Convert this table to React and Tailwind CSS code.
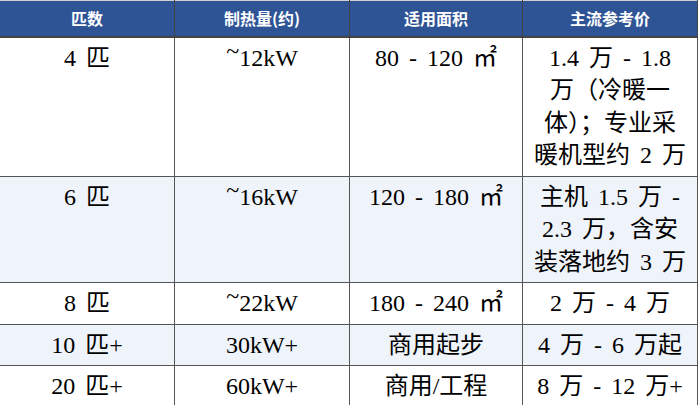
import React from 'react';

const rows = [
  { hp: '4 匹', heat: '~12kW', tilde: true, area: '80 - 120 ㎡', price: ['1.4 万 - 1.8', '万（冷暖一', '体）；专业采', '暖机型约 2 万'], shade: false },
  { hp: '6 匹', heat: '~16kW', tilde: true, area: '120 - 180 ㎡', price: ['主机 1.5 万 -', '2.3 万，含安', '装落地约 3 万'], shade: true },
  { hp: '8 匹', heat: '~22kW', tilde: true, area: '180 - 240 ㎡', price: ['2 万 - 4 万'], shade: false },
  { hp: '10 匹+', heat: '30kW+', area: '商用起步', price: ['4 万 - 6 万起'], shade: true },
  { hp: '20 匹+', heat: '60kW+', area: '商用/工程', price: ['8 万 - 12 万+'], shade: false },
];

const headers = ['匹数', '制热量(约)', '适用面积', '主流参考价'];

const Heat = ({ row }) => {
  if (!row.tilde) return row.heat;
  return (
    <>
      <span className="relative -top-[7px]">~</span>
      {row.heat.slice(1)}
    </>
  );
};

const App = () => {
  const cell = 'border border-[#555555] px-1 py-1 align-top text-center';

  return (
    <div className="w-[700px] h-[405px] bg-white overflow-hidden">
      <table className="-ml-px w-[698px] table-fixed border-collapse">
        <colgroup>
          <col className="w-[175px]" />
          <col className="w-[175px]" />
          <col className="w-[173px]" />
          <col className="w-[175px]" />
        </colgroup>
        <thead>
          <tr>
            {headers.map((h) => (
              <th
                key={h}
                className="h-[36px] border border-[#444444] border-t-[#cfcfcf] border-b-2 bg-[#2f5496] p-0 text-center align-middle font-['Noto_Sans_CJK_SC',sans-serif] text-[16px] font-bold text-white"
              >
                {h}
              </th>
            ))}
          </tr>
        </thead>
        <tbody className="font-['Liberation_Serif','Noto_Sans_CJK_SC',serif] text-[24px] leading-[32.5px] text-black [word-spacing:4px]">
          {rows.map((r) => (
            <tr key={r.hp} className={r.shade ? 'bg-[#eff3fa]' : 'bg-white'}>
              <td className={cell}>{r.hp}</td>
              <td className={cell}>
                <Heat row={r} />
              </td>
              <td className={cell}>{r.area}</td>
              <td className={cell}>
                {r.price.map((line, i) => (
                  <div key={i} className="whitespace-nowrap">{line}</div>
                ))}
              </td>
            </tr>
          ))}
        </tbody>
      </table>
    </div>
  );
};

export default App;
